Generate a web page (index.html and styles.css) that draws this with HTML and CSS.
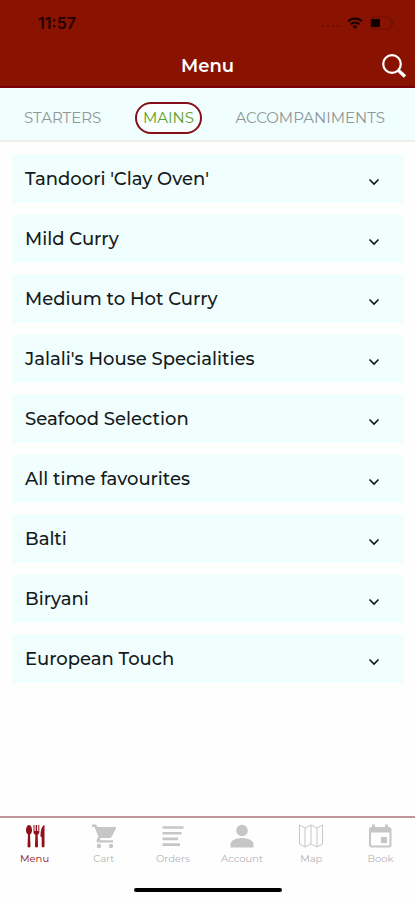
FILE: index.html
```html
<!DOCTYPE html>
<html lang="en">
<head>
<meta charset="utf-8">
<meta name="viewport" content="width=device-width, initial-scale=1">
<title>Menu</title>
<link rel="stylesheet" href="styles.css">
</head>
<body>
<header class="header">
  <div class="status">
    <time class="clock">11:57</time>
    <div class="indicators">
      <svg width="20" height="8" viewBox="0 0 20 8" fill="#5c0c00"><circle cx="2" cy="7" r="1"/><circle cx="7" cy="7" r="1"/><circle cx="12" cy="7" r="1"/><circle cx="17" cy="7" r="1"/></svg>
      <svg width="16" height="12" viewBox="0 0 16 12" fill="none" stroke="#160200" stroke-width="2"><path d="M1 4.400a10 10 0 0 1 14 0M3.600 7.300a6.200 6.200 0 0 1 8.800 0"/><path d="M8 12 5.600 9.400a3.600 3.600 0 0 1 4.800 0z" fill="#160200" stroke="none"/></svg>
      <svg width="26" height="14" viewBox="0 0 26 14"><rect x="1" y="1" width="21" height="12" rx="3.500" fill="none" stroke="#6c0e00"/><rect x="2" y="3" width="9" height="8" rx="1" fill="#0c0000"/><path d="M23.500 4.500c2 1 2 4 0 5z" fill="#5c0c00"/></svg>
    </div>
  </div>
  <div class="titlebar">
    <h1 class="title">Menu</h1>
    <button class="search" type="button" aria-label="Search">
      <svg width="26" height="26" viewBox="0 0 26 26" fill="none" stroke="#fff"><circle cx="11" cy="11" r="8.800" stroke-width="2.200"/><path d="m17.200 17.200 6.800 6.300" stroke-width="3.400"/></svg>
    </button>
  </div>
</header>

<nav class="tabs" aria-label="Courses">
  <a class="tab" href="#starters">STARTERS</a>
  <a class="tab tab-active" href="#mains" aria-current="true">MAINS</a>
  <a class="tab" href="#accompaniments">ACCOMPANIMENTS</a>
</nav>

<main class="list">
  <button class="row" type="button">Tandoori 'Clay Oven'<svg class="chevron" viewBox="0 0 12 8"><path d="m1.500 1.500 4.500 4.500 4.500-4.500"/></svg></button>
  <button class="row" type="button">Mild Curry<svg class="chevron" viewBox="0 0 12 8"><path d="m1.500 1.500 4.500 4.500 4.500-4.500"/></svg></button>
  <button class="row" type="button">Medium to Hot Curry<svg class="chevron" viewBox="0 0 12 8"><path d="m1.500 1.500 4.500 4.500 4.500-4.500"/></svg></button>
  <button class="row" type="button">Jalali's House Specialities<svg class="chevron" viewBox="0 0 12 8"><path d="m1.500 1.500 4.500 4.500 4.500-4.500"/></svg></button>
  <button class="row" type="button">Seafood Selection<svg class="chevron" viewBox="0 0 12 8"><path d="m1.500 1.500 4.500 4.500 4.500-4.500"/></svg></button>
  <button class="row" type="button">All time favourites<svg class="chevron" viewBox="0 0 12 8"><path d="m1.500 1.500 4.500 4.500 4.500-4.500"/></svg></button>
  <button class="row" type="button">Balti<svg class="chevron" viewBox="0 0 12 8"><path d="m1.500 1.500 4.500 4.500 4.500-4.500"/></svg></button>
  <button class="row" type="button">Biryani<svg class="chevron" viewBox="0 0 12 8"><path d="m1.500 1.500 4.500 4.500 4.500-4.500"/></svg></button>
  <button class="row" type="button">European Touch<svg class="chevron" viewBox="0 0 12 8"><path d="m1.500 1.500 4.500 4.500 4.500-4.500"/></svg></button>
</main>

<footer class="bottom">
  <nav class="nav" aria-label="Main">
    <a class="item item-active" href="#menu" aria-current="page">
      <svg class="icon" viewBox="0 0 26 26" fill="currentColor"><path d="M7 2c2 0 3 3 3 5.500C10 9.500 9 11 8 11.500L8.500 23a1.500 1.500 0 0 1-3 0L6 11.500C5 11 4 9.500 4 7.500 4 5 5 2 7 2z"/><path d="M11.500 2h1v6h1.200V2h1.400v6h1.200V2h1v7c0 1.500-.8 2.300-1.600 2.800L16 23a1.500 1.500 0 0 1-3 0l.4-11.200c-1.100-.5-1.900-1.300-1.900-2.800z"/><path d="M22.500 2v21a1.400 1.400 0 0 1-2.800 0v-8.500l-1.200-1C18.500 8 19.500 3 22.500 2z"/></svg>
      Menu
    </a>
    <a class="item" href="#cart">
      <svg class="icon" viewBox="0 0 26 26" fill="currentColor"><path d="M1 1.500h4L6.500 4H25v1.500L20.500 14c-.4.700-1 1-1.800 1H9.800l-1.200 2.200H22v2.300H7.500c-1.700 0-2.500-1.500-1.700-3l1.500-3L3.500 4H1z"/><circle cx="8" cy="23" r="2.200"/><circle cx="20" cy="23" r="2.200"/></svg>
      Cart
    </a>
    <a class="item" href="#orders">
      <svg class="icon" viewBox="0 0 26 26" fill="none" stroke="currentColor" stroke-width="2.600"><path d="M2.500 4.500h21M2.500 10.200h19M2.500 15.900h15.500M2.500 21.600h17.500"/></svg>
      Orders
    </a>
    <a class="item" href="#account">
      <svg class="icon" viewBox="0 0 26 26" fill="currentColor"><circle cx="13" cy="7.500" r="5.800"/><path d="M1.500 24.500V21c0-4 7-6 11.500-6s11.500 2 11.500 6v3.500z"/></svg>
      Account
    </a>
    <a class="item" href="#map">
      <svg class="icon" viewBox="0 0 26 26" fill="none" stroke="currentColor" stroke-width="1" stroke-linejoin="round"><path d="M1.500 2 7 5l6-3 6 3 5.500-3v19L19 24l-6-3-6 3-5.500-3zM7 5v19M13 2v19M19 5v19"/></svg>
      Map
    </a>
    <a class="item" href="#book">
      <svg class="icon" viewBox="0 0 26 26" fill="currentColor"><path d="M5 1.500h3V4h10V1.500h3V4h1c1.500 0 2.500 1 2.500 2.500V22c0 1.500-1 2.500-2.500 2.500H4.500C3 24.500 2 23.500 2 22V6.500C2 5 3 4 4.500 4H5zM4 9.500v12c0 .6.400 1 1 1h16.500c.6 0 1-.4 1-1v-12z" fill-rule="evenodd"/><path d="M14 14h6v6h-6z"/></svg>
      Book
    </a>
  </nav>
  <div class="home"></div>
</footer>
</body>
</html>
```
FILE: styles.css
```css
* {
  box-sizing: border-box;
}

body {
  margin: 0;
  min-height: 100vh;
  display: flex;
  flex-direction: column;
  background: #fefefe;
  font-family: Montserrat, Inter, sans-serif;
}

button {
  border: 0;
  font: inherit;
  cursor: pointer;
}

a {
  text-decoration: none;
}

.header {
  background: #8a1200;
  border-bottom: 2px solid #780008;
  color: #fff;
}

.status {
  display: flex;
  align-items: center;
  justify-content: space-between;
  height: 46px;
  padding: 0 20px 0 38px;
}

.clock {
  color: #210300;
  font-family: Inter, sans-serif;
  font-size: 16px;
  font-weight: 600;
}

.indicators {
  display: flex;
  align-items: center;
  gap: 6px;
}

.titlebar {
  display: grid;
  grid-template-columns: 1fr auto 1fr;
  align-items: center;
  height: 40px;
  padding: 0 8px;
}

.title {
  grid-column: 2;
  margin: 0;
  font-size: 18px;
  font-weight: 600;
}

.search {
  justify-self: end;
  display: flex;
  padding: 0;
  background: none;
}

.tabs {
  display: flex;
  align-items: center;
  justify-content: space-between;
  padding: 14px 30px 6px 24px;
  background: #f0fefe;
  border-bottom: 2px solid #efeeec;
}

.tab {
  color: #8f9797;
  font-size: 15px;
  line-height: 20px;
}

.tab-active {
  padding: 4px 6px;
  border: 2px solid #85101a;
  border-radius: 16px;
  background: #f8fffe;
  color: #5fa02a;
}

.list {
  flex: 1;
  display: flex;
  flex-direction: column;
  gap: 12px;
  padding: 13px 11px 12px 12px;
}

.row {
  display: flex;
  align-items: center;
  justify-content: space-between;
  height: 48px;
  padding: 0 24px 0 13px;
  background: #f0fefe;
  color: #161a1a;
  font-size: 18px;
  font-weight: 500;
  text-align: left;
}

.chevron {
  width: 12px;
  height: 8px;
  margin-top: 6px;
  fill: none;
  stroke: #101414;
  stroke-width: 1.6;
}

.bottom {
  border-top: 2px solid #bd959b;
}

.nav {
  display: grid;
  grid-template-columns: repeat(6, 1fr);
  padding-top: 5px;
}

.item {
  display: flex;
  flex-direction: column;
  align-items: center;
  gap: 3px;
  color: #b4b4b4;
  font-size: 10px;
  line-height: 14px;
}

.item-active {
  color: #8e1119;
}

.icon {
  width: 26px;
  height: 26px;
}

.item:not(.item-active) .icon {
  color: #c6c6c6;
}

.home {
  width: 148px;
  height: 4px;
  margin: 22px auto 8px;
  border-radius: 2px;
  background: #000;
}
```
